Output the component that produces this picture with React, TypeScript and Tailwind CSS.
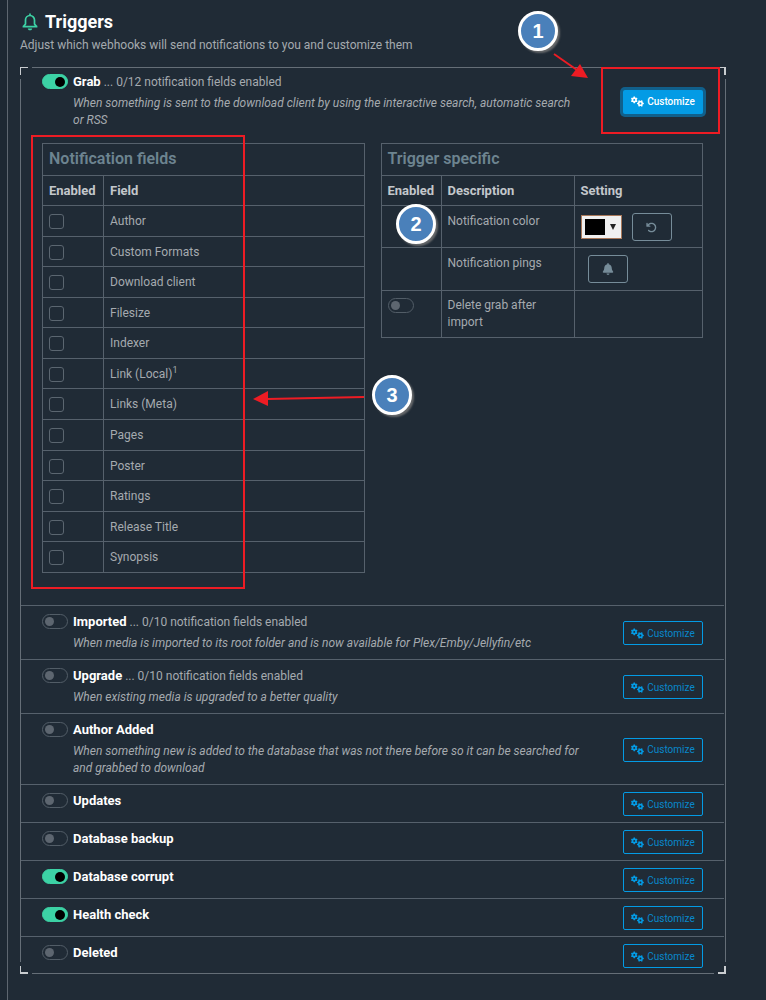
import { FaGears, FaArrowRotateLeft, FaBell } from "react-icons/fa6";

type Trigger = { name: string; enabled?: boolean; count?: string; description?: string };

const fields = [
  "Author",
  "Custom Formats",
  "Download client",
  "Filesize",
  "Indexer",
  "Link (Local)",
  "Links (Meta)",
  "Pages",
  "Poster",
  "Ratings",
  "Release Title",
  "Synopsis",
];

const triggers: Trigger[] = [
  {
    name: "Imported",
    count: "0/10",
    description: "When media is imported to its root folder and is now available for Plex/Emby/Jellyfin/etc",
  },
  { name: "Upgrade", count: "0/10", description: "When existing media is upgraded to a better quality" },
  {
    name: "Author Added",
    description:
      "When something new is added to the database that was not there before so it can be searched for and grabbed to download",
  },
  { name: "Updates" },
  { name: "Database backup" },
  { name: "Database corrupt", enabled: true },
  { name: "Health check", enabled: true },
  { name: "Deleted" },
];

function BellOutline() {
  return (
    <svg viewBox="0 0 16 18" className="h-[18px] w-4" fill="none" stroke="#3cd2a5" strokeWidth="1.7" aria-hidden="true">
      <path d="M8 .5v2M.6 13.6h14.8M1.6 13.4 3.5 11V7a4.5 4.5 0 0 1 9 0v4l1.9 2.4" />
      <path d="M5.8 15.4h4.4c-.2 1.2-1 1.9-2.2 1.9s-2-.7-2.2-1.9Z" fill="#3cd2a5" stroke="none" />
    </svg>
  );
}

function Toggle({ id, on, label }: { id: string; on?: boolean; label?: string }) {
  return (
    <input
      id={id}
      type="checkbox"
      role="switch"
      aria-label={label}
      defaultChecked={on}
      className="flex h-[15px] w-[26px] shrink-0 appearance-none items-center rounded-full border border-[#525d67] px-[2px] before:size-[9px] before:rounded-full before:bg-[#5d6670] checked:justify-end checked:border-[#3cd2a5] checked:bg-[#3cd2a5] checked:before:size-[10px] checked:before:bg-black"
    />
  );
}

function CustomizeButton({ active, name }: { active?: boolean; name: string }) {
  return (
    <button
      type="button"
      aria-label={`Customize ${name}`}
      className={
        active
          ? "flex h-6 w-20 shrink-0 items-center justify-center gap-[3px] rounded-[2px] bg-[#039be5] text-[10px] font-medium text-white ring-3 ring-[#10608c]"
          : "flex h-6 w-20 shrink-0 items-center justify-center gap-[3px] rounded-[2px] border border-[#039be5] text-[10px] text-[#0888cb]"
      }
    >
      <FaGears className={active ? "size-[13px]" : "size-[13px] text-[#039be5]"} />
      Customize
    </button>
  );
}

function TriggerHeader({ trigger, active }: { trigger: Trigger; active?: boolean }) {
  const id = trigger.name.toLowerCase().replace(" ", "-");
  return (
    <div className="flex items-center justify-between">
      <div className="flex gap-[5px] self-start">
        <div className="pt-px">
          <Toggle id={id} on={trigger.enabled} />
        </div>
        <div className="max-w-[515px]">
          <label htmlFor={id} className="block">
            <span className="text-[13px] font-bold text-white">{trigger.name}</span>
            {trigger.count && ` ... ${trigger.count} notification fields enabled`}
          </label>
          {trigger.description && <p className="mt-1 pb-px italic">{trigger.description}</p>}
        </div>
      </div>
      <CustomizeButton active={active} name={trigger.name} />
    </div>
  );
}

function Marker({ value, place }: { value: number; place: string }) {
  return (
    <span
      className={`absolute z-10 flex size-10 items-center justify-center rounded-full border-3 border-white bg-[#4a80ba] font-['Liberation_Sans',sans-serif] text-[20px] font-bold text-white shadow-[2px_2px_2px_rgba(120,120,120,0.8)] ${place}`}
    >
      {value}
    </span>
  );
}

const cell = "border border-[#56616c] px-[6px] text-left align-top";
const title = "border border-[#56616c] px-[6px] pb-[2px] text-left text-[16px] font-semibold text-[#6d8490]";
const columnHead = "h-[30px] text-[13px] text-[#c3c7cb]";
const smallButton =
  "flex h-7 w-10 items-center justify-center rounded-[3px] border border-[#768c99] text-[#768c99]";

function FieldsTable() {
  return (
    <table className="h-[430px] w-full border-collapse self-start">
      <thead>
        <tr className="h-8">
          <th colSpan={2} className={title}>
            Notification fields
          </th>
        </tr>
        <tr className={columnHead}>
          <th className={`${cell} w-[61px] pt-[6px]`}>Enabled</th>
          <th className={`${cell} pt-[6px]`}>Field</th>
        </tr>
      </thead>
      <tbody>
        {fields.map((field, i) => (
          <tr key={field}>
            <td className={`${cell} pt-[7px]`}>
              <input
                id={`field-${i}`}
                type="checkbox"
                className="mt-px block size-[15px] appearance-none rounded-[3px] border border-[#5b6670] checked:bg-[#3cd2a5]"
              />
            </td>
            <td className={`${cell} pt-[7px]`}>
              <label htmlFor={`field-${i}`}>
                {field}
                {field === "Link (Local)" && <sup className="text-[9px]">1</sup>}
              </label>
            </td>
          </tr>
        ))}
      </tbody>
    </table>
  );
}

function SpecificTable() {
  return (
    <table className="w-full border-collapse self-start">
      <thead>
        <tr className="h-8">
          <th colSpan={3} className={title}>
            Trigger specific
          </th>
        </tr>
        <tr className={columnHead}>
          <th className={`${cell} w-[60px] pt-[6px]`}>Enabled</th>
          <th className={`${cell} w-[133px] pt-[6px]`}>Description</th>
          <th className={`${cell} pt-[6px]`}>Setting</th>
        </tr>
      </thead>
      <tbody>
        <tr>
          <td className={cell} />
          <td className={`${cell} pt-[7px]`}>Notification color</td>
          <td className={`${cell} pt-[7px] pb-[6px]`}>
            <div className="flex items-center gap-[10px]">
              <label className="flex h-6 w-[41px] items-center gap-[5px] border border-[#a8785a] bg-[#f0f0f0] pl-[3px]">
                <input
                  type="color"
                  aria-label="Notification color"
                  defaultValue="#000000"
                  className="h-4 w-5 shrink-0 appearance-none bg-black p-0 [&::-webkit-color-swatch]:border-0 [&::-webkit-color-swatch-wrapper]:p-0"
                />
                <svg viewBox="0 0 6 6" className="size-[6px]" aria-hidden="true">
                  <path d="M0 0h6L3 6Z" fill="#222" />
                </svg>
              </label>
              <button type="button" aria-label="Reset color" className={smallButton}>
                <FaArrowRotateLeft className="size-[11px]" />
              </button>
            </div>
          </td>
        </tr>
        <tr>
          <td className={cell} />
          <td className={`${cell} pt-[7px]`}>Notification pings</td>
          <td className={`${cell} py-[7px]`}>
            <button type="button" aria-label="Notification pings" className={`${smallButton} ml-[7px]`}>
              <FaBell className="size-[12px]" />
            </button>
          </td>
        </tr>
        <tr className="h-[47px]">
          <td className={`${cell} py-[7px]`}>
            <Toggle id="delete-grab" label="Delete grab after import" />
          </td>
          <td className={`${cell} py-[6px]`}>Delete grab after import</td>
          <td className={cell} />
        </tr>
      </tbody>
    </table>
  );
}

export default function App() {
  return (
    <main className="min-h-screen bg-[#1d2833] pl-[7px] font-['Roboto',sans-serif] text-[12px] leading-[17px] text-[#a5aaaf]">
      <div className="min-h-screen border-l border-[#5d6670] bg-[#202b36] pt-2 pr-10 pb-6 pl-3">
        <h1 className="flex h-[27px] items-center gap-[7px] pl-[2px] text-[18px] font-bold text-white">
          <BellOutline />
          Triggers
        </h1>
        <p className="mt-[2px]">Adjust which webhooks will send notifications to you and customize them</p>

        <section className="relative mt-[13px] px-px pt-px">
          <span className="absolute inset-x-3 top-0 h-px bg-[#656e77]" />
          <span className="absolute inset-x-3 bottom-0 h-px bg-[#656e77]" />
          <span className="absolute inset-y-3 left-0 w-px bg-[#656e77]" />
          <span className="absolute inset-y-3 right-0 w-px bg-[#656e77]" />
          <span className="absolute top-0 left-0 size-2 border-t border-l border-[#c9cdd0]" />
          <span className="absolute top-0 right-0 size-2 border-t border-r-2 border-[#c9cdd0]" />
          <span className="absolute bottom-0 left-0 size-2 border-b-2 border-l border-[#c9cdd0]" />
          <span className="absolute right-0 bottom-0 size-2 border-r-2 border-b-2 border-[#c9cdd0]" />

          <div className="mr-px px-[21px] pt-[5px] pb-8">
            <TriggerHeader
              active
              trigger={{
                name: "Grab",
                enabled: true,
                count: "0/12",
                description:
                  "When something is sent to the download client by using the interactive search, automatic search or\u00a0RSS",
              }}
            />
            <div className="mt-[13px] grid grid-cols-2 gap-4">
              <FieldsTable />
              <SpecificTable />
            </div>
          </div>

          {triggers.map((trigger) => (
            <div key={trigger.name} className="mr-px border-t border-[#56616c] px-[21px] pt-[7px] pb-[6px]">
              <TriggerHeader trigger={trigger} />
            </div>
          ))}

          <span className="absolute top-0 right-[6px] h-[67px] w-[119px] border-2 border-[#ed1c24]" />
          <span className="absolute top-[68px] left-[11px] h-[454px] w-[214px] border-2 border-[#ed1c24]" />
          <svg className="absolute -top-4 right-[134px] h-7 w-10" viewBox="0 0 40 28" aria-hidden="true">
            <path d="M2 3 25 19" stroke="#ed1c24" strokeWidth="2" />
            <path d="m36 27-17-2 9-12Z" fill="#ed1c24" />
          </svg>
          <svg className="absolute top-[323px] left-[232px] h-4 w-[113px]" viewBox="0 0 113 16" aria-hidden="true">
            <path d="M15 9 112 7" stroke="#ed1c24" strokeWidth="2" />
            <path d="M1 9 16 1v15Z" fill="#ed1c24" />
          </svg>
          <Marker value={1} place="-top-14 right-[168px]" />
          <Marker value={2} place="top-[137px] left-[376px]" />
          <Marker value={3} place="top-[308px] left-[352px]" />
        </section>
      </div>
    </main>
  );
}
